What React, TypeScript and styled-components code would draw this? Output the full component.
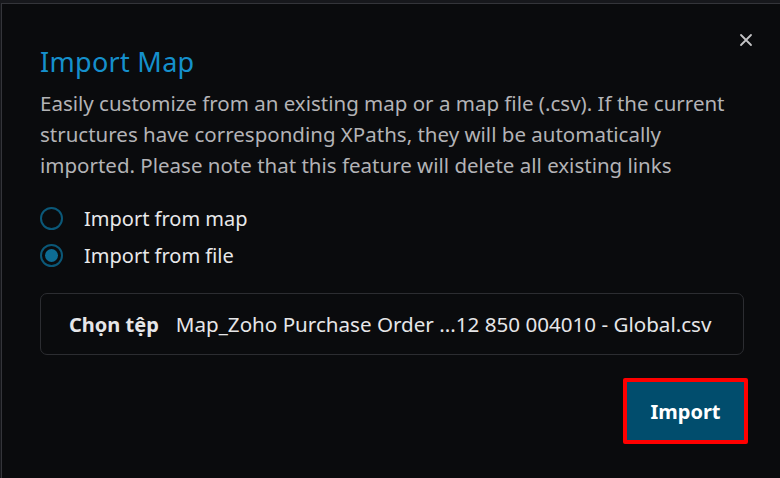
import React, { useState } from "react";
import styled, { createGlobalStyle } from "styled-components";

const Global = createGlobalStyle`
  html, body { margin: 0; padding: 0; background: #17181c; }
  body { width: 780px; height: 478px; overflow: hidden; font-family: "Noto Sans", "Open Sans", sans-serif; }
  * { box-sizing: border-box; }
`;

const Dialog = styled.div`
  margin: 3px 0 0 1px;
  height: 475px;
  border-top: 1px solid #34353a;
  border-left: 1px solid #34353a;
  background: #0a0b0d;
  padding: 26px 36px 0 38px;
  display: flex;
  flex-direction: column;
`;

const Header = styled.div`
  display: flex;
  justify-content: space-between;
  align-items: flex-start;
  height: 54px;
`;

const Title = styled.h2`
  margin: 14px 0 0 0;
  font-size: 27px;
  font-weight: 400;
  color: #1590cc;
  line-height: 36px;
  letter-spacing: 0.3px;
`;

const Close = styled.button`
  background: none;
  border: none;
  padding: 0;
  margin: 2px -10px 0 0;
  width: 16px;
  height: 16px;
  cursor: pointer;
  display: flex;
`;

const Desc = styled.p`
  margin: 4px 0 0 0;
  max-width: 700px;
  font-size: 20.5px;
  line-height: 31px;
  color: #b3b3b6;
`;

const RadioGroup = styled.div`
  display: flex;
  flex-direction: column;
  gap: 13px;
  margin-top: 25px;
`;

const RadioRow = styled.label`
  display: flex;
  align-items: center;
  gap: 21px;
  font-size: 20px;
  color: #e8e8ea;
  cursor: pointer;
  height: 24px;
`;

const Circle = styled.span<{ $checked: boolean }>`
  width: 23px;
  height: 23px;
  flex-shrink: 0;
  border-radius: 50%;
  border: 2px solid #0b5878;
  display: flex;
  align-items: center;
  justify-content: center;
  &::after {
    content: "";
    width: 13px;
    height: 13px;
    border-radius: 50%;
    background: ${(p) => (p.$checked ? "#0e6c94" : "transparent")};
  }
`;

const FileBox = styled.div`
  margin-top: 26px;
  height: 62px;
  border: 1px solid #2c2d31;
  border-radius: 7px;
  display: flex;
  align-items: center;
  padding-left: 28px;
  gap: 17px;
  font-size: 20.6px;
  color: #e6e6e8;
  white-space: nowrap;
`;

const FileLabel = styled.span`
  font-weight: 700;
  font-size: 20px;
`;

const Footer = styled.div`
  display: flex;
  justify-content: flex-end;
  margin-top: 23px;
  margin-right: -4px;
`;

const Highlight = styled.div`
  border: 4px solid #ff0000;
  border-radius: 2px;
  display: flex;
`;

const ImportButton = styled.button`
  width: 117px;
  height: 58px;
  background: #014d6d;
  border: none;
  color: #ffffff;
  font-family: "Noto Sans", "Open Sans", sans-serif;
  font-size: 20px;
  font-weight: 700;
  cursor: pointer;
`;

export default function App() {
  const [mode, setMode] = useState<"map" | "file">("file");
  return (
    <>
      <Global />
      <Dialog>
        <Header>
          <Title>Import Map</Title>
          <Close aria-label="Close">
            <svg width="16" height="16" viewBox="0 0 16 16">
              <path d="M3 3 L13 13 M13 3 L3 13" stroke="#c4c4c6" strokeWidth="1.8" strokeLinecap="round" />
            </svg>
          </Close>
        </Header>
        <Desc>
          Easily customize from an existing map or a map file (.csv). If the current structures have corresponding
          XPaths, they will be automatically imported. Please note that this feature will delete all existing links
        </Desc>
        <RadioGroup>
          <RadioRow onClick={() => setMode("map")}>
            <Circle $checked={mode === "map"} />
            Import from map
          </RadioRow>
          <RadioRow onClick={() => setMode("file")}>
            <Circle $checked={mode === "file"} />
            Import from file
          </RadioRow>
        </RadioGroup>
        <FileBox>
          <FileLabel>Chọn tệp</FileLabel>
          <span>Map_Zoho Purchase Order ...12 850 004010 - Global.csv</span>
        </FileBox>
        <Footer>
          <Highlight>
            <ImportButton>Import</ImportButton>
          </Highlight>
        </Footer>
      </Dialog>
    </>
  );
}
